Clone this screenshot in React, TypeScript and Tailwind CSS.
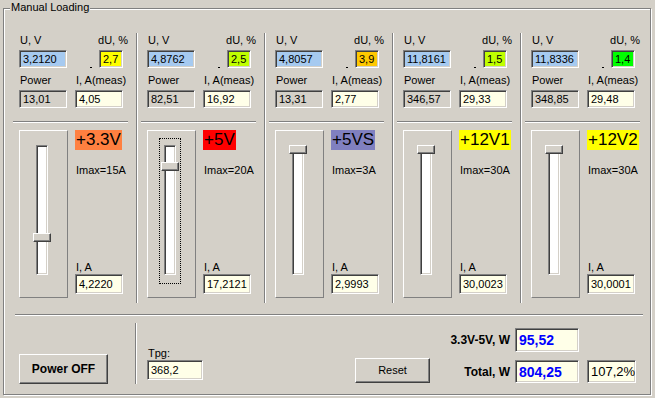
import React from "react";

type Channel = {
  name: string;
  nameBg: string;
  u: string;
  du: string;
  duBg: string;
  power: string;
  iMeas: string;
  imax: string;
  iSet: string;
  thumbTop: number; // положение ползунка от верха дорожки, px
  focused?: boolean;
};

const channels: Channel[] = [
  { name: "+3.3V", nameBg: "bg-[#ff8040]", u: "3,2120", du: "2,7", duBg: "bg-[#ffff00]", power: "13,01", iMeas: "4,05", imax: "Imax=15A", iSet: "4,2220", thumbTop: 88 },
  { name: "+5V", nameBg: "bg-[#ff0000]", u: "4,8762", du: "2,5", duBg: "bg-[#c0ff00]", power: "82,51", iMeas: "16,92", imax: "Imax=20A", iSet: "17,2121", thumbTop: 17, focused: true },
  { name: "+5VS", nameBg: "bg-[#8080c0]", u: "4,8057", du: "3,9", duBg: "bg-[#ffc800]", power: "13,31", iMeas: "2,77", imax: "Imax=3A", iSet: "2,9993", thumbTop: 0 },
  { name: "+12V1", nameBg: "bg-[#ffff00]", u: "11,8161", du: "1,5", duBg: "bg-[#c0ff00]", power: "346,57", iMeas: "29,33", imax: "Imax=30A", iSet: "30,0023", thumbTop: 0 },
  { name: "+12V2", nameBg: "bg-[#ffff00]", u: "11,8336", du: "1,4", duBg: "bg-[#00ff00]", power: "348,85", iMeas: "29,48", imax: "Imax=30A", iSet: "30,0001", thumbTop: 0 },
];

const sunken =
  "border border-t-[#808080] border-l-[#808080] border-b-white border-r-white shadow-[inset_1px_1px_0_#404040,inset_-1px_-1px_0_#d4d0c8]";
const raisedBtn =
  "border border-t-white border-l-white border-b-[#404040] border-r-[#404040] shadow-[inset_-1px_-1px_0_#808080] bg-[#d4d0c8]";

const Field = ({ value, className = "" }: { value: string; className?: string }) => (
  <div className={`flex items-center pl-[3px] leading-none whitespace-nowrap overflow-hidden ${sunken} ${className}`}>
    {value}
  </div>
);

const HLine = ({ className = "" }: { className?: string }) => (
  <div className={`h-[2px] border-t border-t-[#808080] border-b border-b-white ${className}`} />
);

const VLine = ({ className = "" }: { className?: string }) => (
  <div className={`w-[2px] border-l border-l-[#808080] border-r border-r-white ${className}`} />
);

const Column = ({ c, first }: { c: Channel; first: boolean }) => (
  <div
    className={`w-[128px] h-[270px] flex flex-col ${
      first ? "pl-[11px]" : "pl-[10px] border-l border-l-[#808080] shadow-[inset_1px_0_0_#fff]"
    }`}
  >
    <div className="mt-[1px] h-[13px] w-[109px] flex justify-between leading-[13px]">
      <span className="pl-[1px]">U, V</span>
      <span>dU, %</span>
    </div>
    <div className="mt-[3px] flex items-start">
      <Field value={c.u} className="w-[48px] h-[18px] bg-[#a6caf0]" />
      <div className="ml-[23px] mt-[17px] w-[2px] h-[1px] bg-black" />
      <Field value={c.du} className={`ml-[7px] w-[24px] h-[18px] ${c.duBg}`} />
    </div>
    <div className="mt-[6px] h-[13px] flex leading-[13px]">
      <span className="pl-[1px] w-[57px]">Power</span>
      <span>I, A(meas)</span>
    </div>
    <div className="mt-[3px] flex gap-[8px]">
      <Field value={c.power} className="w-[48px] h-[18px] bg-[#d4d0c8]" />
      <Field value={c.iMeas} className="w-[48px] h-[18px] bg-[#ffffe8]" />
    </div>
    <HLine className="mt-[13px] -ml-[6px] w-[115px]" />
    <div className="mt-[7px] flex">
      <div className="relative w-[49px] h-[168px] border border-t-white border-l-white border-b-[#808080] border-r-[#808080]">
        {c.focused && (
          <div className="absolute left-[11px] top-[7px] w-[22px] h-[146px] border border-dotted border-black" />
        )}
        <div className={`relative ml-[16px] mt-[14px] w-[12px] h-[130px] bg-white ${sunken}`}>
          <div
            className={`absolute left-[-4px] w-[18px] h-[9px] ${raisedBtn}`}
            style={{ top: c.thumbTop - 1 }}
          />
        </div>
      </div>
      <div className="ml-[7px] h-[168px] flex flex-col items-start">
        <div className={`h-[20px] px-[1px] text-[17px] leading-[20px] ${c.nameBg}`}>{c.name}</div>
        <div className="mt-[14px] h-[13px] leading-[13px] pl-[1px]">{c.imax}</div>
        <div className="mt-auto h-[13px] leading-[13px] pl-[1px]">I, A</div>
        <Field value={c.iSet} className="w-[48px] h-[20px] bg-[#ffffe8] mb-[4px]" />
      </div>
    </div>
  </div>
);

export default function App() {
  return (
    <div className="w-[655px] h-[398px] overflow-hidden bg-[#d4d0c8] pt-[8px] pl-[3px] text-[11px] text-black font-['Liberation_Sans',Arial,sans-serif]">
      <div className="relative w-[648px] h-[387px] border border-[#808080] shadow-[inset_1px_1px_0_#fff,1px_1px_0_#fff] pl-[4px] pt-[24px]">
        <span className="absolute left-[6px] top-[-8px] px-[1px] h-[13px] leading-[13px] bg-[#d4d0c8]">
          Manual Loading
        </span>

        <div className="flex h-[270px]">
          {channels.map((c, i) => (
            <Column key={c.name} c={c} first={i === 0} />
          ))}
        </div>

        <HLine className="mt-[11px] ml-[7px] w-[628px]" />

        <div className="flex items-start">
          <div className="w-[127px]">
            <button
              type="button"
              className={`ml-[11px] mt-[38px] w-[89px] h-[30px] font-bold text-[12px] ${raisedBtn}`}
            >
              Power OFF
            </button>
          </div>
          <VLine className="mt-[7px] h-[61px]" />
          <div className="ml-[10px] mt-[31px] flex flex-col">
            <span className="h-[13px] leading-[13px] pl-[1px]">Tpg:</span>
            <Field value="368,2" className="w-[56px] h-[20px] bg-[#ffffe8]" />
          </div>
          <button type="button" className={`ml-[152px] mt-[42px] w-[75px] h-[25px] ${raisedBtn}`}>
            Reset
          </button>
          <div className="mt-[12px] flex flex-col gap-[8px]">
            <div className="flex items-center">
              <span className="w-[80px] text-right font-bold text-[12px]">3.3V-5V, W</span>
              <Field value="95,52" className="ml-[5px] w-[64px] h-[24px] bg-[#ffffe8] text-[#0000ff] font-bold text-[14px]" />
            </div>
            <div className="flex items-center">
              <span className="w-[80px] text-right font-bold text-[12px]">Total, W</span>
              <Field value="804,25" className="ml-[5px] w-[64px] h-[23px] bg-[#ffffe8] text-[#0000ff] font-bold text-[14px]" />
              <Field value="107,2%" className="ml-[8px] w-[49px] h-[23px] bg-[#ffffe8] text-[13px]" />
            </div>
          </div>
        </div>
      </div>
    </div>
  );
}
